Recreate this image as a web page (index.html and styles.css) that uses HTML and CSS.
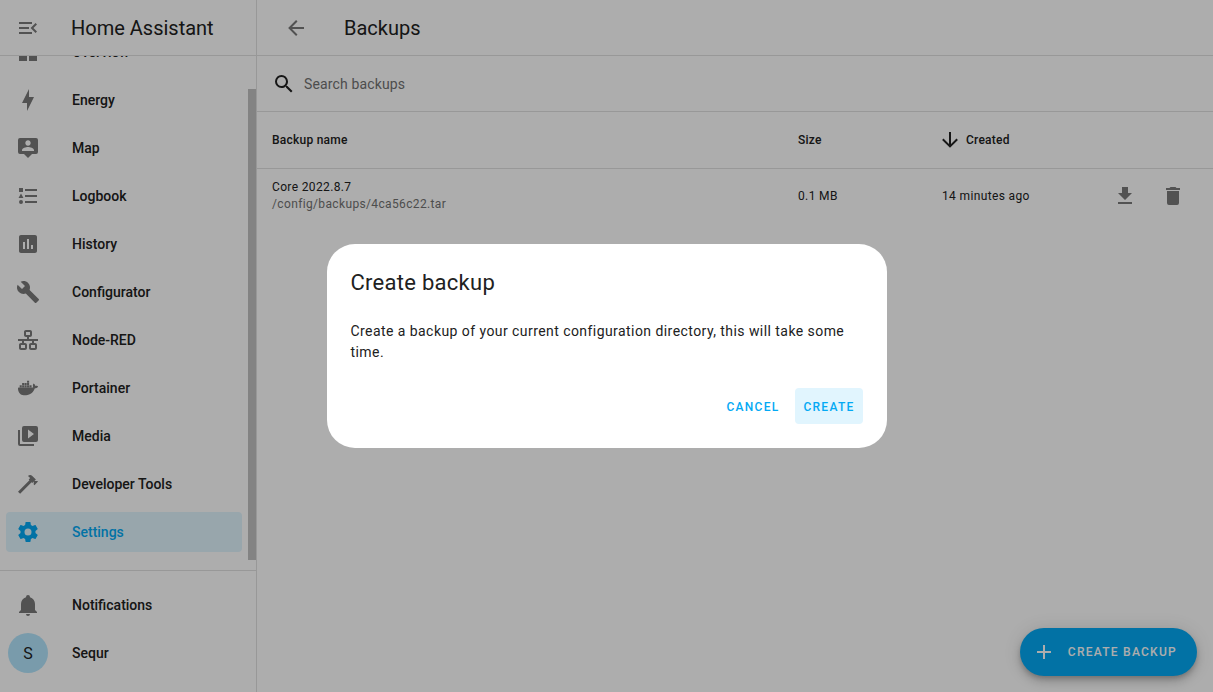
FILE: index.html
```html
<!DOCTYPE html>
<html lang="en">
<head>
<meta charset="utf-8">
<meta name="viewport" content="width=device-width, initial-scale=1">
<title>Backups – Home Assistant</title>
<link rel="stylesheet" href="styles.css">
</head>
<body>
<div class="app">
  <aside class="sidebar">
    <header class="toolbar sidebar-header">
      <button class="icon-button" type="button" aria-label="Toggle sidebar">
        <svg class="icon" viewBox="0 0 24 24"><path d="M21,15.61L19.59,17L14.58,12L19.59,7L21,8.39L17.44,12L21,15.61M3,6H16V8H3V6M3,13V11H13V13H3M3,18V16H16V18H3Z"/></svg>
      </button>
      <span class="title">Home Assistant</span>
    </header>
    <nav class="nav">
      <div class="nav-list">
        <a class="item" href="#overview"><svg class="icon" viewBox="0 0 24 24"><path d="M13,3V9H21V3M13,21H21V11H13M3,21H11V15H3M3,13H11V3H3V13Z"/></svg>Overview</a>
        <a class="item" href="#energy"><svg class="icon" viewBox="0 0 24 24"><path d="M11 15H6L13 1V9H18L11 23V15Z"/></svg>Energy</a>
        <a class="item" href="#map"><svg class="icon" viewBox="0 0 24 24"><path d="M20,2H4A2,2 0 0,0 2,4V16A2,2 0 0,0 4,18H8L12,22L16,18H20A2,2 0 0,0 22,16V4A2,2 0 0,0 20,2M12,4.3C13.5,4.3 14.7,5.5 14.7,7C14.7,8.5 13.5,9.7 12,9.7C10.5,9.7 9.3,8.5 9.3,7C9.3,5.5 10.5,4.3 12,4.3M18,15H6V14.1C6,12.1 10,11 12,11C14,11 18,12.1 18,14.1V15Z"/></svg>Map</a>
        <a class="item" href="#logbook"><svg class="icon" viewBox="0 0 24 24"><path d="M5,9.5L7.5,14H2.5L5,9.5M3,4H7V8H3V4M5,20A2,2 0 0,0 7,18A2,2 0 0,0 5,16A2,2 0 0,0 3,18A2,2 0 0,0 5,20M9,5V7H21V5H9M9,19H21V17H9V19M9,13H21V11H9V13Z"/></svg>Logbook</a>
        <a class="item" href="#history"><svg class="icon" viewBox="0 0 24 24"><path d="M9 17H7V10H9V17M13 17H11V7H13V17M17 17H15V13H17V17M19 3H5C3.89 3 3 3.89 3 5V19C3 20.1 3.89 21 5 21H19C20.1 21 21 20.1 21 19V5C21 3.89 20.1 3 19 3Z"/></svg>History</a>
        <a class="item" href="#configurator"><svg class="icon" viewBox="0 0 24 24"><path d="M22.7,19L13.6,9.9C14.5,7.6 14,4.9 12.1,3C10.1,1 7.1,0.6 4.7,1.7L9,6L6,9L1.6,4.7C0.4,7.1 0.9,10.1 2.9,12.1C4.8,14 7.5,14.5 9.8,13.6L18.9,22.7C19.3,23.1 19.9,23.1 20.3,22.7L22.6,20.4C23.1,20 23.1,19.3 22.7,19Z"/></svg>Configurator</a>
        <a class="item" href="#node-red"><svg class="icon" viewBox="0 0 24 24"><path d="M10,2C8.89,2 8,2.89 8,4V7C8,8.11 8.89,9 10,9H11V11H2V13H6V15H5C3.89,15 3,15.89 3,17V20C3,21.11 3.89,22 5,22H9C10.11,22 11,21.11 11,20V17C11,15.89 10.11,15 9,15H8V13H16V15H15C13.89,15 13,15.89 13,17V20C13,21.11 13.89,22 15,22H19C20.11,22 21,21.11 21,20V17C21,15.89 20.11,15 19,15H18V13H22V11H13V9H14C15.11,9 16,8.11 16,7V4C16,2.89 15.11,2 14,2H10M10,4H14V7H10V4M5,17H9V20H5V17M15,17H19V20H15V17Z"/></svg>Node-RED</a>
        <a class="item" href="#portainer"><svg class="icon" viewBox="0 0 24 24"><path d="M21.81 10.25C21.75 10.21 21.25 9.82 20.17 9.82C19.89 9.82 19.61 9.85 19.33 9.9C19.12 8.5 17.95 7.79 17.9 7.76L17.61 7.59L17.43 7.86C17.19 8.22 17 8.63 16.92 9.05C16.72 9.85 16.84 10.61 17.25 11.25C16.76 11.53 15.96 11.6 15.79 11.61H2.62C2.28 11.61 2 11.89 2 12.24C2 13.39 2.18 14.54 2.58 15.62C3.03 16.81 3.71 17.69 4.58 18.23C5.56 18.83 7.17 19.17 9 19.17C9.79 19.17 10.61 19.1 11.42 18.95C12.54 18.75 13.62 18.36 14.61 17.79C15.43 17.32 16.16 16.72 16.78 16C17.82 14.83 18.43 13.5 18.89 12.35H19.07C20.23 12.35 20.94 11.89 21.33 11.5C21.59 11.26 21.78 10.97 21.92 10.63L22 10.39ZM3.69 9.34H5.77V11.24H3.69ZM6.12 9.34H8.2V11.24H6.12ZM8.59 9.34H10.67V11.24H8.59ZM11.05 9.34H13.13V11.24H11.05ZM13.5 9.34H15.58V11.24H13.5ZM6.12 7.08H8.2V8.98H6.12ZM8.59 7.08H10.67V8.98H8.59ZM11.05 7.08H13.13V8.98H11.05ZM11.05 4.83H13.13V6.73H11.05Z"/></svg>Portainer</a>
        <a class="item" href="#media"><svg class="icon" viewBox="0 0 24 24"><path d="M4,6H2V20A2,2 0 0,0 4,22H18V20H4V6M20,2H8A2,2 0 0,0 6,4V16A2,2 0 0,0 8,18H20A2,2 0 0,0 22,16V4A2,2 0 0,0 20,2M12,14.5V5.5L18,10L12,14.5Z"/></svg>Media</a>
        <a class="item" href="#developer-tools"><svg class="icon" viewBox="0 0 24 24"><path d="M2,19.63L13.43,8.2L12.72,7.5L14.14,6.07L12,3.89C13.2,2.7 15.09,2.7 16.27,3.89L19.87,7.5L18.45,8.91H21.29L22,9.62L18.45,13.21L17.74,12.5V9.62L16.27,11.04L15.56,10.33L4.13,21.76L2,19.63Z"/></svg>Developer Tools</a>
        <a class="item selected" href="#settings" aria-current="page"><svg class="icon" viewBox="0 0 24 24"><path d="M12,15.5A3.5,3.5 0 0,1 8.5,12A3.5,3.5 0 0,1 12,8.5A3.5,3.5 0 0,1 15.5,12A3.5,3.5 0 0,1 12,15.5M19.43,12.97C19.47,12.65 19.5,12.33 19.5,12C19.5,11.67 19.47,11.34 19.43,11L21.54,9.37C21.73,9.22 21.78,8.95 21.66,8.73L19.66,5.27C19.54,5.05 19.27,4.96 19.05,5.05L16.56,6.05C16.04,5.66 15.5,5.32 14.87,5.07L14.5,2.42C14.46,2.18 14.25,2 14,2H10C9.75,2 9.54,2.18 9.5,2.42L9.13,5.07C8.5,5.32 7.96,5.66 7.44,6.05L4.95,5.05C4.73,4.96 4.46,5.05 4.34,5.27L2.34,8.73C2.21,8.95 2.27,9.22 2.46,9.37L4.57,11C4.53,11.34 4.5,11.67 4.5,12C4.5,12.33 4.53,12.65 4.57,12.97L2.46,14.63C2.27,14.78 2.21,15.05 2.34,15.27L4.34,18.73C4.46,18.95 4.73,19.03 4.95,18.95L7.44,17.94C7.96,18.34 8.5,18.68 9.13,18.93L9.5,21.58C9.54,21.82 9.75,22 10,22H14C14.25,22 14.46,21.82 14.5,21.58L14.87,18.93C15.5,18.67 16.04,18.34 16.56,17.94L19.05,18.95C19.27,19.03 19.54,18.95 19.66,18.73L21.66,15.27C21.78,15.05 21.73,14.78 21.54,14.63L19.43,12.97Z"/></svg>Settings</a>
      </div>
      <div class="scroll-track"><div class="scroll-thumb"></div></div>
    </nav>
    <div class="sidebar-footer">
      <a class="item" href="#notifications"><svg class="icon" viewBox="0 0 24 24"><path d="M21,19V20H3V19L5,17V11C5,7.9 7.03,5.17 10,4.29C10,4.19 10,4.1 10,4A2,2 0 0,1 12,2A2,2 0 0,1 14,4C14,4.1 14,4.19 14,4.29C16.97,5.17 19,7.9 19,11V17L21,19M14,21A2,2 0 0,1 12,23A2,2 0 0,1 10,21"/></svg>Notifications</a>
      <a class="item user" href="#profile"><span class="avatar" aria-hidden="true">S</span>Sequr</a>
    </div>
  </aside>

  <main class="main">
    <header class="toolbar main-header">
      <button class="icon-button" type="button" aria-label="Back">
        <svg class="icon" viewBox="0 0 24 24"><path d="M20,11V13H8L13.5,18.5L12.08,19.92L4.16,12L12.08,4.08L13.5,5.5L8,11H20Z"/></svg>
      </button>
      <h1 class="title">Backups</h1>
    </header>
    <label class="search">
      <svg class="icon" viewBox="0 0 24 24"><path d="M9.5,3A6.5,6.5 0 0,1 16,9.5C16,11.11 15.41,12.59 14.44,13.73L14.71,14H15.5L20.5,19L19,20.5L14,15.5V14.71L13.73,14.44C12.59,15.41 11.11,16 9.5,16A6.5,6.5 0 0,1 3,9.5A6.5,6.5 0 0,1 9.5,3M9.5,5C7,5 5,7 5,9.5C5,12 7,14 9.5,14C12,14 14,12 14,9.5C14,7 12,5 9.5,5Z"/></svg>
      <input class="search-input" type="text" placeholder="Search backups" aria-label="Search backups">
    </label>
    <table class="table">
      <thead>
        <tr>
          <th scope="col">Backup name</th>
          <th scope="col" class="col-size">Size</th>
          <th scope="col" class="col-created" aria-sort="descending">
            <button class="sort" type="button"><svg class="icon" viewBox="0 0 24 24"><path d="M11,4H13V16L18.5,10.5L19.92,11.92L12,19.84L4.08,11.92L5.5,10.5L11,16V4Z"/></svg>Created</button>
          </th>
          <td class="col-actions"></td>
        </tr>
      </thead>
      <tbody>
        <tr>
          <td>Core 2022.8.7<div class="secondary">/config/backups/4ca56c22.tar</div></td>
          <td>0.1 MB</td>
          <td>14 minutes ago</td>
          <td class="col-actions">
            <div class="actions">
              <button class="icon-button" type="button" aria-label="Download backup"><svg class="icon" viewBox="0 0 24 24"><path d="M5,20H19V18H5M19,9H15V3H9V9H5L12,16L19,9Z"/></svg></button>
              <button class="icon-button" type="button" aria-label="Delete backup"><svg class="icon" viewBox="0 0 24 24"><path d="M19,4H15.5L14.5,3H9.5L8.5,4H5V6H19M6,19A2,2 0 0,0 8,21H16A2,2 0 0,0 18,19V7H6V19Z"/></svg></button>
            </div>
          </td>
        </tr>
      </tbody>
    </table>
    <button class="fab" type="button">
      <svg class="icon" viewBox="0 0 24 24"><path d="M19,13H13V19H11V13H5V11H11V5H13V11H19V13Z"/></svg>Create backup
    </button>
  </main>
</div>

<div class="scrim">
  <div class="dialog" role="dialog" aria-modal="true" aria-labelledby="dialog-title">
    <h2 class="dialog-title" id="dialog-title">Create backup</h2>
    <p class="dialog-text">Create a backup of your current configuration directory, this will take some time.</p>
    <div class="dialog-actions">
      <button class="text-button" type="button">Cancel</button>
      <button class="text-button focused" type="button">Create</button>
    </div>
  </div>
</div>
</body>
</html>
```

FILE: styles.css
```css
:root {
  --primary: #03a9f4;
  --primary-tint: #e1f5fe;
  --text: #212121;
  --text-secondary: #727272;
  --icon: #797979;
  --divider: #e0e0e0;
}

* {
  box-sizing: border-box;
}

body {
  margin: 0;
  font-family: Roboto, "Noto Sans", sans-serif;
  font-size: 14px;
  color: var(--text);
  background: #fff;
}

button {
  font: inherit;
  color: inherit;
  letter-spacing: inherit;
  background: none;
  border: 0;
  padding: 0;
  cursor: pointer;
}

.icon {
  display: block;
  flex: none;
  width: 24px;
  height: 24px;
  fill: currentColor;
  fill-rule: evenodd;
}

.icon-button {
  display: flex;
  align-items: center;
  justify-content: center;
  flex: none;
  width: 48px;
  height: 48px;
  color: var(--icon);
}

.app {
  display: grid;
  grid-template-columns: 257px 1fr;
  height: 100vh;
}

.toolbar {
  display: flex;
  align-items: center;
  flex: none;
  height: 56px;
  border-bottom: 1px solid var(--divider);
}

.title {
  margin: 0;
  font-size: 20px;
  font-weight: 400;
}

/* Sidebar */

.sidebar {
  display: flex;
  flex-direction: column;
  min-height: 0;
  border-right: 1px solid var(--divider);
}

.sidebar-header {
  gap: 19px;
  padding: 0 4px;
}

.nav {
  display: flex;
  flex: 1;
  min-height: 0;
  padding-bottom: 10px;
}

/* The list rests at its scroll end. */
.nav-list {
  display: flex;
  flex: 1;
  flex-direction: column;
  justify-content: flex-end;
  gap: 8px;
  padding: 0 6px 8px;
  overflow: hidden;
}

.scroll-track {
  display: flex;
  align-items: flex-end;
  width: 8px;
}

.scroll-thumb {
  width: 100%;
  height: 93.5%;
  background: #c1c1c1;
}

.item {
  display: flex;
  align-items: center;
  flex: none;
  gap: 32px;
  height: 40px;
  padding: 0 10px;
  border-radius: 4px;
  font-weight: 500;
  color: var(--text);
  text-decoration: none;
}

.item .icon {
  color: var(--icon);
}

.selected {
  background: var(--primary-tint);
}

.selected,
.selected .icon {
  color: var(--primary);
}

.sidebar-footer {
  display: flex;
  flex: none;
  flex-direction: column;
  gap: 8px;
  padding: 14px 6px 19px;
  border-top: 1px solid var(--divider);
}

.user {
  gap: 24px;
  padding: 0 2px;
}

.avatar {
  display: flex;
  align-items: center;
  justify-content: center;
  width: 40px;
  height: 40px;
  border-radius: 50%;
  background: #b3e5fc;
  font-size: 16px;
  font-weight: 400;
}

/* Main panel */

.main {
  position: relative;
  min-width: 0;
}

.main-header {
  gap: 24px;
  padding: 0 15px;
}

.search {
  display: flex;
  align-items: center;
  gap: 8px;
  height: 56px;
  padding: 0 15px;
  border-bottom: 1px solid var(--divider);
}

.search-input {
  flex: 1;
  padding: 0;
  border: 0;
  outline: 0;
  background: none;
  font: inherit;
  letter-spacing: 0.01em;
  color: inherit;
}

.search-input::placeholder {
  color: var(--text-secondary);
  opacity: 1;
}

.table {
  width: 100%;
  border-collapse: separate;
  border-spacing: 0;
  table-layout: fixed;
  font-size: 12px;
  letter-spacing: 0.02em;
  text-align: left;
}

.table th,
.table td {
  padding: 0 15px;
}

.table thead th,
.table thead td {
  height: 57px;
  border-bottom: 1px solid var(--divider);
  font-weight: 500;
}

.table tbody td {
  height: 53px;
  letter-spacing: 0.03em;
}

.secondary {
  color: var(--text-secondary);
  padding-top: 3px;
}

.col-size,
.col-created {
  width: 144px;
}

.table .col-actions {
  width: 142px;
  padding: 0 16px 0 0;
}

.sort {
  display: flex;
  align-items: center;
  gap: 4px;
  margin-left: -4px;
}

.actions {
  display: flex;
  justify-content: flex-end;
}

.fab {
  position: absolute;
  right: 16px;
  bottom: 16px;
  display: flex;
  align-items: center;
  gap: 12px;
  height: 48px;
  padding: 0 20px 0 12px;
  border-radius: 24px;
  background: var(--primary);
  color: #fff;
  font-size: 12px;
  font-weight: 500;
  letter-spacing: 0.105em;
  text-transform: uppercase;
  box-shadow: 0 3px 5px -1px rgba(0, 0, 0, 0.2), 0 6px 10px 0 rgba(0, 0, 0, 0.14), 0 1px 18px 0 rgba(0, 0, 0, 0.12);
}

/* Dialog */

.scrim {
  position: fixed;
  inset: 0;
  display: flex;
  align-items: center;
  justify-content: center;
  background: rgba(0, 0, 0, 0.32);
}

.dialog {
  width: 560px;
  max-width: calc(100vw - 32px);
  padding: 25px 24px 24px;
  border-radius: 28px;
  background: #fff;
}

.dialog-title {
  margin: 0 0 24px;
  font-size: 22px;
  font-weight: 400;
  line-height: 28px;
  letter-spacing: 0.0125em;
}

.dialog-text {
  margin: 0 0 25px;
  line-height: 21px;
  letter-spacing: 0.03125em;
}

.dialog-actions {
  display: flex;
  justify-content: flex-end;
  gap: 8px;
}

.text-button {
  height: 36px;
  padding: 1px 8px 0;
  border-radius: 4px;
  color: var(--primary);
  font-size: 12px;
  font-weight: 500;
  letter-spacing: 0.105em;
  text-transform: uppercase;
}

.focused {
  background: var(--primary-tint);
}
```
